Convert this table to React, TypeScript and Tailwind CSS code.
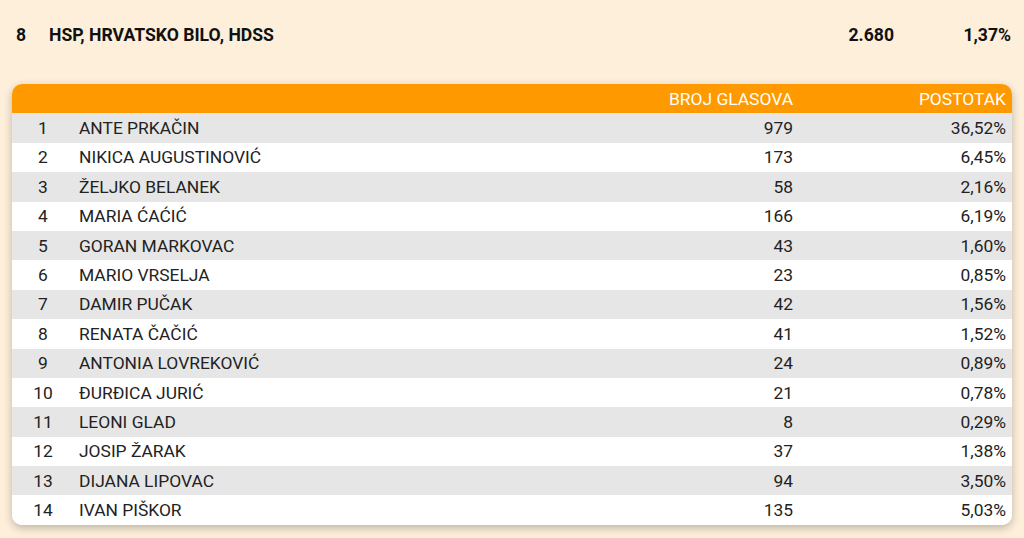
const candidates = [
  { n: 1, name: 'ANTE PRKAČIN', votes: '979', pct: '36,52%' },
  { n: 2, name: 'NIKICA AUGUSTINOVIĆ', votes: '173', pct: '6,45%' },
  { n: 3, name: 'ŽELJKO BELANEK', votes: '58', pct: '2,16%' },
  { n: 4, name: 'MARIA ĆAĆIĆ', votes: '166', pct: '6,19%' },
  { n: 5, name: 'GORAN MARKOVAC', votes: '43', pct: '1,60%' },
  { n: 6, name: 'MARIO VRSELJA', votes: '23', pct: '0,85%' },
  { n: 7, name: 'DAMIR PUČAK', votes: '42', pct: '1,56%' },
  { n: 8, name: 'RENATA ČAČIĆ', votes: '41', pct: '1,52%' },
  { n: 9, name: 'ANTONIA LOVREKOVIĆ', votes: '24', pct: '0,89%' },
  { n: 10, name: 'ĐURĐICA JURIĆ', votes: '21', pct: '0,78%' },
  { n: 11, name: 'LEONI GLAD', votes: '8', pct: '0,29%' },
  { n: 12, name: 'JOSIP ŽARAK', votes: '37', pct: '1,38%' },
  { n: 13, name: 'DIJANA LIPOVAC', votes: '94', pct: '3,50%' },
  { n: 14, name: 'IVAN PIŠKOR', votes: '135', pct: '5,03%' },
];

export default function App() {
  return (
    <div className="w-[1024px] h-[538px] bg-[#fdefda] font-['Roboto',sans-serif] text-[#222] overflow-hidden">
      <div className="flex items-center h-[34px] mt-[18px] text-[17.6px] font-bold text-[#111]">
        <div className="w-[49px] pl-[16px]">8</div>
        <div className="flex-1">HSP, HRVATSKO BILO, HDSS</div>
        <div className="w-[80px] text-right">2.680</div>
        <div className="w-[130px] text-right pr-[13px]">1,37%</div>
      </div>

      <div className="mx-[12px] mt-[32px] bg-white rounded-[10px] overflow-hidden shadow-[0_3px_8px_rgba(0,0,0,0.25)]">
        <div className="flex bg-[#ff9900] text-white h-[29.4px] items-center text-[17.4px]">
          <div className="w-[62px]"></div>
          <div className="flex-1"></div>
          <div className="w-[200px] text-right">BROJ GLASOVA</div>
          <div className="w-[219px] text-right pr-[6px]">POSTOTAK</div>
        </div>
        {candidates.map((c) => (
          <div
            key={c.n}
            className={`flex h-[29.4px] items-center text-[17.4px] ${c.n % 2 === 1 ? 'bg-[#e6e6e6]' : 'bg-white'}`}
          >
            <div className="w-[62px] text-center">{c.n}</div>
            <div className="flex-1 pl-[5px]">{c.name}</div>
            <div className="w-[200px] text-right">{c.votes}</div>
            <div className="w-[219px] text-right pr-[6px]">{c.pct}</div>
          </div>
        ))}
      </div>
    </div>
  );
}
